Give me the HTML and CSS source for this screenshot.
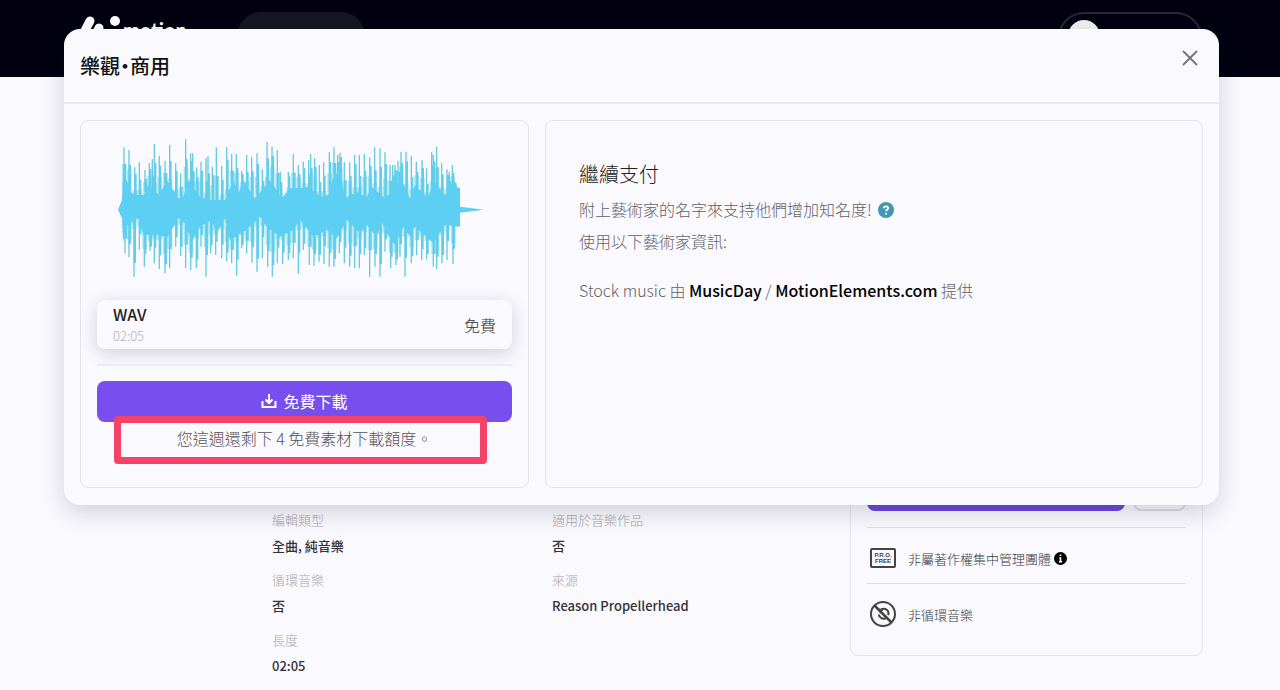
FILE: index.html
```html
<!DOCTYPE html>
<html lang="zh-Hant">
<head>
<meta charset="utf-8">
<title>樂觀・商用</title>
<link rel="stylesheet" href="styles.css">
</head>
<body>
<header class="topbar">
  <a class="logo" href="#" aria-label="motion elements">
    <svg class="logo-mark" viewBox="0 0 42 32" width="42" height="32" aria-hidden="true"><g stroke="#fff" stroke-width="9" stroke-linecap="round" fill="none"><path d="M0 24 10 5M12 26l7-14M25 28l3-9"/></g><circle cx="35" cy="5" r="5" fill="#fff"/></svg>
    <span class="logo-text">motion</span>
  </a>
  <button class="nav-pill" type="button" aria-label="Browse"></button>
  <button class="account" type="button" aria-label="Account"><span class="avatar"></span></button>
</header>

<main class="page">
  <dl class="facts">
    <div><dt>編輯類型</dt><dd>全曲, 純音樂</dd></div>
    <div><dt>適用於音樂作品</dt><dd>否</dd></div>
    <div><dt>循環音樂</dt><dd>否</dd></div>
    <div><dt>來源</dt><dd>Reason Propellerhead</dd></div>
    <div><dt>長度</dt><dd>02:05</dd></div>
  </dl>
  <aside class="side">
    <div class="side-actions">
      <button class="side-main" type="button" aria-label="Download"></button>
      <button class="side-more" type="button" aria-label="More"></button>
    </div>
    <div class="side-row">
      <svg width="26" height="28" viewBox="0 0 26 28" aria-hidden="true"><rect x="1" y="4" width="24" height="18" rx="1" fill="none" stroke="#444" stroke-width="2"/><text class="pro-text" x="13" y="12" text-anchor="middle">P.R.O.</text><text class="pro-text" x="13" y="18" text-anchor="middle">FREE</text></svg>
      <span>非屬著作權集中管理團體</span>
      <svg class="info" width="13" height="13" viewBox="0 0 16 16" aria-hidden="true"><circle cx="8" cy="8" r="8" fill="#000"/><path d="M8 3v2M6.500 7.500H8v4M6 12h4" stroke="#fff" stroke-width="2" fill="none"/></svg>
    </div>
    <div class="side-row">
      <svg width="26" height="28" viewBox="0 0 26 28" fill="none" stroke="#444" aria-hidden="true"><circle cx="13" cy="13" r="12" stroke-width="2"/><path d="M4.500 4.500l17 17" stroke-width="2.500"/><path d="M11 8.200c4.500-1.700 8.500 1.300 7.300 6M15.800 17.300c-3 1.200-6.500-.3-7-3.800" stroke-width="2"/><path d="M6 7l7.500 1.500-3 4z" fill="#444" stroke="none"/></svg>
      <span>非循環音樂</span>
    </div>
  </aside>
</main>

<div class="overlay">
<section class="dialog" role="dialog" aria-labelledby="title">
  <header class="dialog-head">
    <h1 id="title">樂觀・商用</h1>
    <button class="close" type="button" aria-label="Close"><svg width="16" height="16" viewBox="0 0 16 16" aria-hidden="true"><path d="M1.500 1.500l13 13M14.500 1.500l-13 13" stroke="#747378" stroke-width="1.800" stroke-linecap="round"/></svg></button>
  </header>
  <div class="dialog-body">
    <div class="panel product">
      <svg class="wave" viewBox="54 24 1098 420" width="366" height="140" aria-hidden="true"><path id="wave-edge" fill="#a9e6f4"/><path id="wave-body" fill="#5dcff2"/><path id="wave-spikes" stroke="#67cbe2" stroke-width="4"/></svg>
      <div class="format">
        <div><div class="format-name">WAV</div><div class="format-time">02:05</div></div>
        <span class="format-price">免費</span>
      </div>
      <hr>
      <button class="download" type="button">
        <svg width="16" height="16" viewBox="0 0 16 16" fill="none" stroke="#fff" stroke-width="2" aria-hidden="true"><path d="M1.500 8v6h13V8M8 1v8M4.500 6.500L8 10l3.500-3.500"/></svg>
        免費下載
      </button>
      <p class="quota">您這週還剩下 4 免費素材下載額度。<span class="mark"></span></p>
    </div>
    <div class="panel credit">
      <h2>繼續支付</h2>
      <p>附上藝術家的名字來支持他們增加知名度!<svg class="help" width="16" height="16" viewBox="0 0 16 16" aria-hidden="true"><circle cx="8" cy="8" r="8" fill="#4596b2"/><path d="M5.800 6.200c.1-2.600 4.400-2.500 4.400 0 0 1.500-2.200 1.500-2.200 3.100M8 10.800v1.700" stroke="#fff" stroke-width="1.700" fill="none"/></svg></p>
      <p>使用以下藝術家資訊:</p>
      <p class="attribution">Stock music 由 <b>MusicDay</b> / <b>MotionElements.com</b> 提供</p>
    </div>
  </div>
</section>
</div>
<script src="wave.js"></script>
</body>
</html>
```
FILE: styles.css
```css
* { box-sizing: border-box; }
body { margin: 0; background: #faf9fe; color: #111; font: 300 16px/24px "Noto Sans CJK TC", sans-serif; min-height: 100vh; overflow: hidden; }
button { font: inherit; border: 0; padding: 0; background: none; }
h1, h2, p, dl, dd { margin: 0; }
.topbar { height: 77px; background: #020010; display: flex; align-items: flex-start; padding: 12px 78px 0 80px; }
.logo { display: flex; align-items: flex-start; padding-top: 4px; color: #fff; text-decoration: none; }
.logo-mark { overflow: visible; }
.logo-text { font: 700 20px/24px Lato, sans-serif; padding-top: 2px; margin-left: 1px; }
.nav-pill { width: 128px; height: 48px; margin-left: 50px; border-radius: 24px; background: #171623; }
.account { width: 144px; height: 52px; margin-left: auto; border: 2px solid #292836; border-radius: 26px; display: flex; padding: 6px 8px; }
.avatar { width: 32px; height: 32px; border-radius: 50%; background: #f0f0ee; }
.page { display: flex; justify-content: space-between; align-items: flex-start; padding: 393px 77px 0 272px; }
.facts { display: grid; grid-template-columns: 280px 280px; padding-top: 40px; font-size: 13px; line-height: 20px; row-gap: 14px; }
.facts dt { color: #aaa8b0; margin-bottom: 6px; }
.facts dd { color: #333238; font-weight: 500; }
.side { flex: 0 0 353px; border: 1px solid #e5e4ec; border-radius: 8px; padding: 0 16px 16px; }
.side-actions { display: flex; gap: 8px; padding-bottom: 16px; }
.side-main { flex: 1; height: 40px; border-radius: 8px; background: #6c47df; }
.side-more { width: 53px; height: 40px; border: 2px solid #dddce4; border-radius: 8px; }
.side-row { display: flex; align-items: center; height: 56px; border-top: 1px solid #dfdee5; padding: 6px 3px 0; font-size: 13px; color: #3a393f; }
.side-row span { margin-left: 12px; }
.side-row .info { margin-left: 3px; }
.pro-text { font: 700 6px "Liberation Sans", sans-serif; fill: #444; }
.overlay { position: absolute; inset: 29px 61px auto 64px; }
.dialog { background: #faf9fe; border-radius: 16px; box-shadow: 0 8px 24px rgba(20, 18, 35, .17); }
.dialog-head { display: flex; justify-content: space-between; align-items: flex-start; height: 75px; padding: 20px 20px 0 16px; border-bottom: 2px solid #ebeaf0; }
h1 { font-size: 20px; line-height: 34px; font-weight: 500; font-feature-settings: "halt"; }
.close { display: flex; padding: 1px; }
.dialog-body { display: grid; grid-template-columns: 449px 1fr; gap: 16px; padding: 16px 16px 17px; }
.panel { border: 1px solid #e5e4ec; border-radius: 8px; min-height: 368px; }
.product { padding: 17px 16px 0; }
.wave { display: block; margin: 0 auto 22px 21px; }
.format { display: flex; align-items: center; justify-content: space-between; height: 49px; padding: 0 16px; border-radius: 8px; box-shadow: 0 4px 18px rgba(20, 18, 35, .18); background: #faf9fe; }
.format-name { font-weight: 500; line-height: 22px; color: #222; }
.format-time { font-size: 13px; line-height: 22px; color: #b5b4ba; }
.format-price { color: #333; }
hr { border: 0; border-top: 2px solid #ecebf1; margin: 15px 0; }
.download { width: 100%; height: 41px; padding-bottom: 2px; border-radius: 8px; background: #784fee; color: #fff; font-weight: 400; display: flex; align-items: center; justify-content: center; gap: 6px; }
.quota { position: relative; text-align: center; padding-top: 4px; color: #555459; }
.mark { position: absolute; inset: -6px 25px -14px 17px; border: 7px solid #f54268; border-radius: 4px; }
.credit { padding: 38px 33px; color: #626167; line-height: 32px; }
h2 { font-size: 20px; line-height: 30px; font-weight: 300; color: #222; margin-bottom: 4px; }
.help { margin-left: 6px; vertical-align: -2px; }
.attribution { margin-top: 17px; }
b { font-weight: 500; color: #000; }
```
FILE: wave.js
```js
// Each list holds x, y pairs in the units of the waveform's viewBox.
const upper = [72,52,87,60,104,112,118,97,135,120,148,100,157,88,163,42,178,78,195,92,209,45,227,100,242,130,257,28,272,70,278,70,290,112,303,95,318,85,324,78,337,110,349,52,365,108,380,52,395,72,409,72,425,122,440,75,455,80,471,70,487,118,501,35,516,50,532,60,541,125,565,125,580,72,595,105,610,95,626,90,632,72,644,85,658,105,671,97,688,67,702,52,713,75,720,68,733,97,749,97,764,75,778,75,793,72,809,82,824,52,840,55,855,67,870,105,878,105,885,105,894,92,903,65,918,65,934,78,949,95,966,90,980,115,995,67,1000,75,1010,50,1025,100,1041,118,1048,125,1057,105,1064,155];
const lower = [75,370,87,382,102,440,118,360,133,410,150,362,163,400,178,417,195,430,209,415,227,350,242,378,257,415,272,420,289,415,303,350,318,440,332,370,347,375,365,385,380,395,395,400,410,437,425,355,440,370,456,398,471,425,487,385,503,410,517,440,532,400,548,402,565,390,580,385,595,432,610,360,628,405,642,408,657,395,672,402,688,410,702,410,718,370,733,400,749,410,764,415,778,415,793,375,809,440,825,410,840,440,855,365,872,415,888,405,900,380,915,440,934,400,950,375,965,390,980,388,1000,410,1010,417,1026,400,1041,390,1059,402];
const coreTop = [69,140,80,150,95,190,130,195,145,165,178,195,200,150,235,205,250,200,265,150,300,200,330,210,375,210,400,150,415,190,430,150,465,205,490,175,510,150,545,205,570,175,625,170,660,200,685,195,700,140,720,120,735,205,770,185,800,200,815,170,855,205,880,180,900,140,930,205,945,165,985,205,1000,150,1035,195,1055,165,1080,175];
const coreBottom = [69,340,75,290,115,265,130,315,180,315,200,325,235,265,255,280,275,335,300,290,335,270,350,310,375,265,390,330,440,300,480,260,500,290,540,320,580,300,600,270,640,320,680,300,710,325,740,270,780,310,800,285,830,320,845,275,860,310,885,345,910,290,930,320,945,290,1000,340,1035,285,1080,290];

function points(list) {
  const result = [];
  for (let i = 0; i < list.length; i += 2) result.push([list[i], list[i + 1]]);
  return result;
}
function levelAt(list, x) {
  const p = points(list);
  const i = Math.max(1, p.findIndex(([px]) => px >= x));
  const [a, b] = [p[i - 1], p[i]];
  return Math.round(a[1] + (b[1] - a[1]) * (x - a[0]) / (b[0] - a[0]));
}
// Bars above and below the axis are drawn clockwise, like the outline.
function bar(left, right, y) {
  return y < 240 ? `M${left} 240V${y}H${right}V240Z` : `M${right} 240V${y}H${left}V240Z`;
}
const outline = [...points(coreTop), [1080, 230], [1152, 239], [1080, 248], ...points(coreBottom).reverse(), [66, 265], [54, 239], [66, 210]];
let body = "M" + outline.map(p => p.join(" ")).join("L") + "Z";
let edge = "";
let spikes = "";
[[upper, coreTop], [lower, coreBottom]].forEach(([peaks, core]) => {
  points(peaks).forEach(([x, y], i) => {
    const base = levelAt(core, x);
    const shoulder = Math.round(base + (y - base) * (.45 + i % 3 * .15));
    const pale = Math.round(base + (y - base) * (i % 4 < 2 ? .45 : .15));
    spikes += `M${x} ${y}V${base}`;
    body += bar(x - 1, x + 6, shoulder);
    edge += bar(x - 6, x + 8, pale);
  });
});
document.getElementById("wave-body").setAttribute("d", body);
document.getElementById("wave-edge").setAttribute("d", edge);
document.getElementById("wave-spikes").setAttribute("d", spikes);
```
